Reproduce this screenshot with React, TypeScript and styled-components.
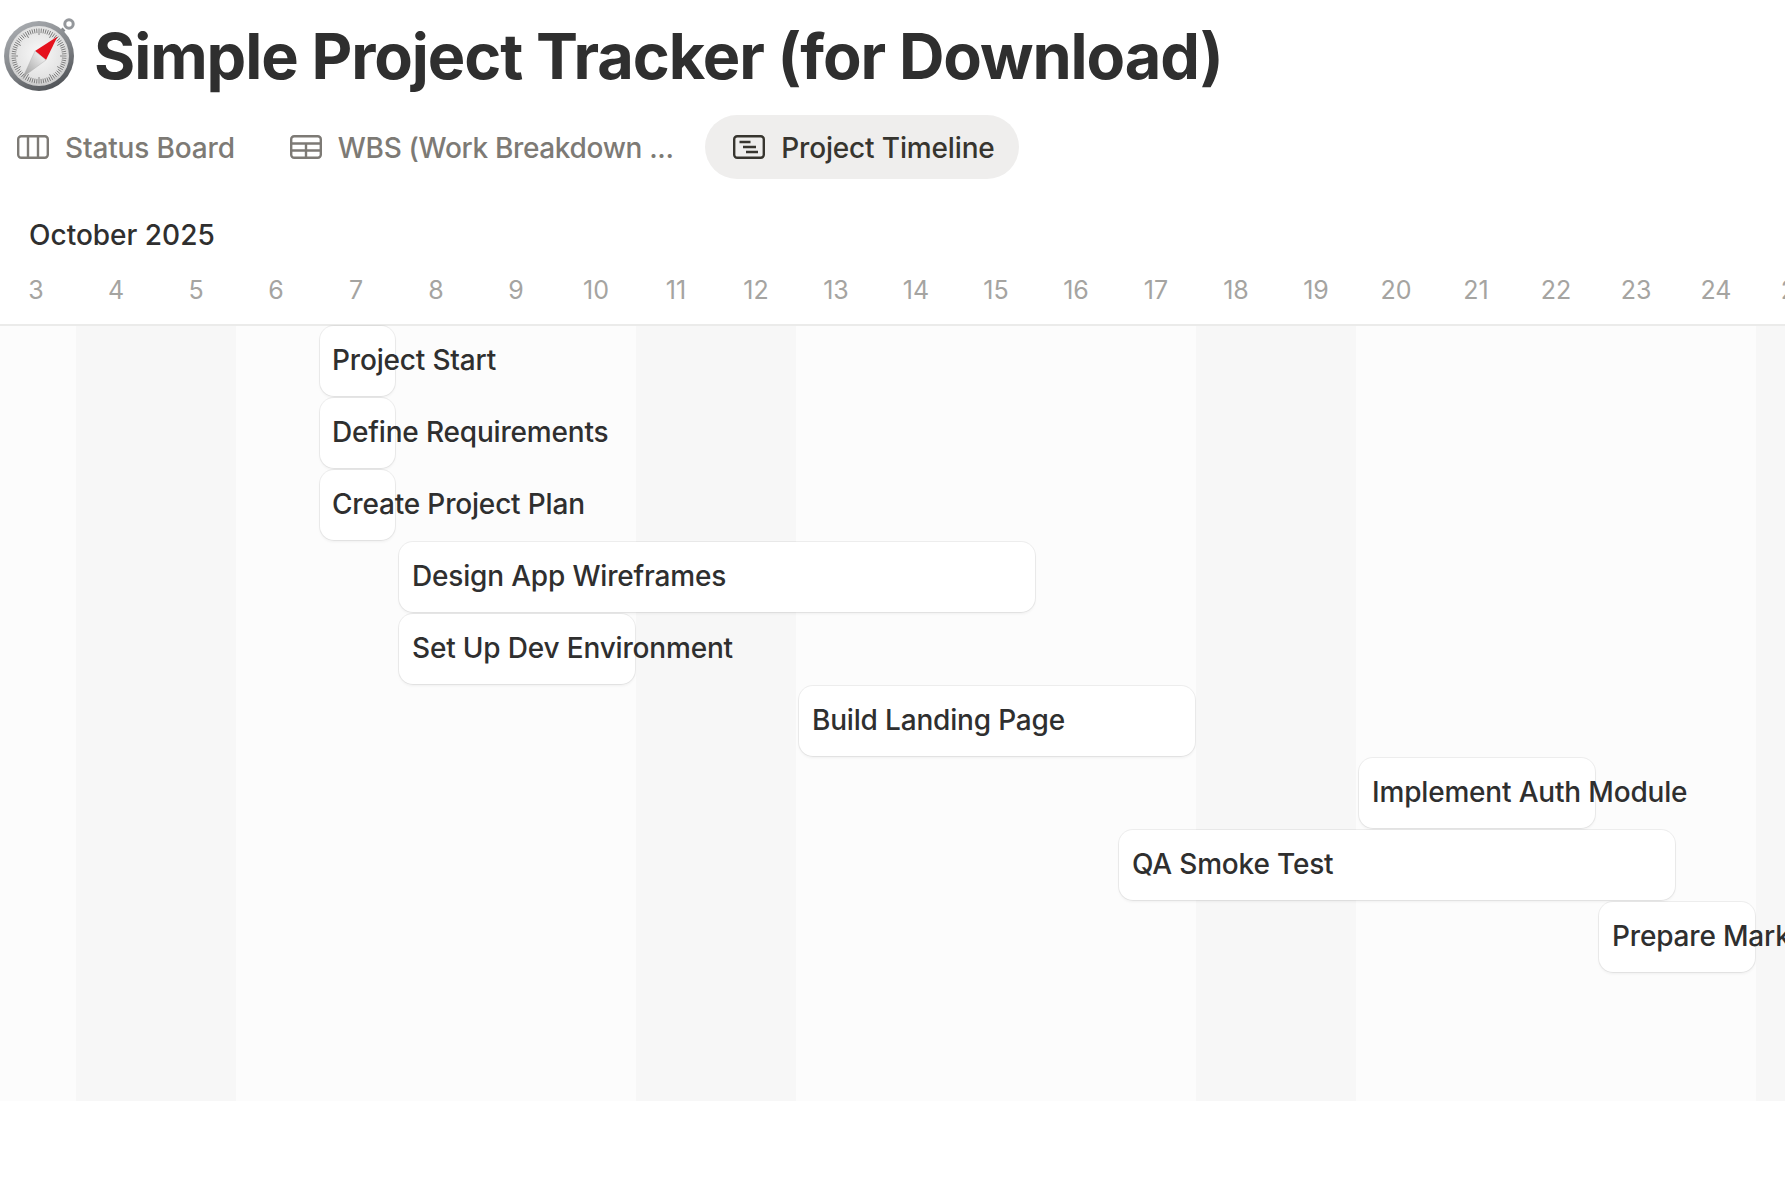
import { FC } from 'react';
import styled, { createGlobalStyle } from 'styled-components';

const DAY_WIDTH = 80;
const FIRST_DAY = 3;
const days = Array.from({ length: 23 }, (_, i) => FIRST_DAY + i);
const isWeekend = (day: number) => day % 7 === 4 || day % 7 === 5;

const tasks = [
  { name: 'Project Start', from: 7, to: 7, tight: true },
  { name: 'Define Requirements', from: 7, to: 7, tight: true },
  { name: 'Create Project Plan', from: 7, to: 7, tight: true },
  { name: 'Design App Wireframes', from: 8, to: 15 },
  { name: 'Set Up Dev Environment', from: 8, to: 10 },
  { name: 'Build Landing Page', from: 13, to: 17 },
  { name: 'Implement Auth Module', from: 20, to: 22 },
  { name: 'QA Smoke Test', from: 17, to: 23 },
  { name: 'Prepare Marketing Assets', from: 23, to: 24 },
];

const CompassEmoji: FC = () => {
  const ticks = Array.from({ length: 72 }, (_, i) => i * 5);
  return (
    <EmojiSvg viewBox="0 0 80 94" aria-hidden="true">
      <defs>
        <linearGradient id="rim" x1="0.25" y1="0" x2="0.75" y2="1">
          <stop offset="0" stopColor="#a9acb0" />
          <stop offset="0.55" stopColor="#7f8286" />
          <stop offset="1" stopColor="#4c4f53" />
        </linearGradient>
        <radialGradient id="face" cx="0.5" cy="0.45" r="0.62">
          <stop offset="0" stopColor="#f8f8f8" />
          <stop offset="0.7" stopColor="#e2e2e2" />
          <stop offset="1" stopColor="#b9b9b9" />
        </radialGradient>
        <linearGradient id="tail" x1="1" y1="0" x2="0" y2="1">
          <stop offset="0" stopColor="#ffffff" />
          <stop offset="1" stopColor="#9a9a9a" />
        </linearGradient>
      </defs>
      <line x1="64" y1="29" x2="60" y2="33" stroke="#85888c" strokeWidth="4" />
      <circle cx="69" cy="24" r="4.2" fill="none" stroke="#94979b" strokeWidth="3" />
      <circle cx="39" cy="56" r="35" fill="url(#rim)" />
      <circle cx="39" cy="56" r="30" fill="url(#face)" />
      {ticks.map((angle) => (
        <line
          key={angle}
          x1="39"
          y1="28.5"
          x2="39"
          y2={angle % 30 === 0 ? 35 : 33}
          stroke="#6f6f6f"
          strokeWidth="0.8"
          transform={`rotate(${angle} 39 56)`}
        />
      ))}
      <polygon points="57.5,36.5 46,60 35,51" fill="#e5111d" />
      <polygon points="46,60 35,51 23,77" fill="url(#tail)" stroke="#a9a9a9" strokeWidth="0.4" />
    </EmojiSvg>
  );
};

const BoardIcon: FC = () => (
  <TabSvg viewBox="0 0 32 24" aria-hidden="true">
    <rect x="1.2" y="1.2" width="29.6" height="21.6" rx="3" />
    <path d="M11 1.2v21.6M21 1.2v21.6" />
  </TabSvg>
);

const TableIcon: FC = () => (
  <TabSvg viewBox="0 0 32 24" aria-hidden="true">
    <rect x="1.2" y="1.2" width="29.6" height="21.6" rx="3" />
    <path d="M1.2 8.5h29.6M1.2 15.5h29.6M16 8.5v14.3" />
  </TabSvg>
);

const TimelineIcon: FC = () => (
  <TabSvg viewBox="0 0 32 24" aria-hidden="true">
    <rect x="1.2" y="1.2" width="29.6" height="21.6" rx="3" />
    <path d="M6.5 7h11M10 12h13M13 17h12" />
  </TabSvg>
);

export default function App() {
  return (
    <>
      <GlobalStyle />
      <Page>
        <TitleRow>
          <CompassEmoji />
          <Title>Simple Project Tracker (for Download)</Title>
        </TitleRow>
        <Tabs>
          <Tab>
            <BoardIcon />
            <TabLabel>Status Board</TabLabel>
          </Tab>
          <Tab>
            <TableIcon />
            <TabLabel $narrow>WBS (Work Breakdown ...</TabLabel>
          </Tab>
          <Tab $active>
            <TimelineIcon />
            <TabLabel>Project Timeline</TabLabel>
          </Tab>
        </Tabs>
        <Month>October 2025</Month>
        <DayRow>
          {days.map((day) => (
            <DayLabel key={day}>{day}</DayLabel>
          ))}
        </DayRow>
        <Chart>
          {days.map((day, i) => (
            <Stripe key={day} $column={i + 1} $weekend={isWeekend(day)} />
          ))}
          {tasks.map((task, i) => (
            <Bar
              key={task.name}
              $row={i + 1}
              $column={task.from - FIRST_DAY + 1}
              $span={task.to - task.from + 1}
              $tight={task.tight}
            >
              <BarLabel>{task.name}</BarLabel>
            </Bar>
          ))}
        </Chart>
      </Page>
    </>
  );
}

const GlobalStyle = createGlobalStyle`
  html, body {
    margin: 0;
    background: #ffffff;
    overflow: hidden;
  }

  body {
    font-family: Inter, "Liberation Sans", sans-serif;
    color: #2f2f2f;
  }
`;

const Page = styled.div`
  width: 1785px;
  height: 1190px;
  overflow: hidden;
`;

const TitleRow = styled.div`
  display: flex;
  align-items: center;
  height: 115px;
`;

const EmojiSvg = styled.svg`
  flex: none;
  width: 80px;
  height: 94px;
  margin-right: 14px;
  align-self: flex-start;
  display: block;
`;

const Title = styled.h1`
  margin: 0 0 2px;
  font-size: 63px;
  line-height: 1;
  font-weight: 700;
  letter-spacing: -1.08px;
  white-space: nowrap;
  color: #2f2f2f;
`;

const Tabs = styled.div`
  display: flex;
  align-items: center;
  height: 64px;
  margin-left: -11px;
  gap: 3px;
`;

const TabSvg = styled.svg`
  flex: none;
  width: 32px;
  height: 24px;
  fill: none;
  stroke: currentColor;
  stroke-width: 2.4;
`;

const Tab = styled.div<{ $active?: boolean }>`
  display: flex;
  align-items: center;
  gap: 16px;
  height: 64px;
  padding: 0 24px 0 28px;
  border-radius: 32px;
  color: ${({ $active }) => ($active ? '#37352f' : '#7d7a75')};
  background: ${({ $active }) => ($active ? '#efeeed' : 'transparent')};
  margin-left: ${({ $active }) => ($active ? '4.5px' : '0')};
`;

const TabLabel = styled.span<{ $narrow?: boolean }>`
  padding-top: 2px;
  font-size: 28px;
  font-weight: 500;
  white-space: nowrap;
  letter-spacing: ${({ $narrow }) => ($narrow ? '-0.33px' : '-0.15px')};
`;

const Month = styled.div`
  margin: 38px 0 0 29px;
  height: 36px;
  font-size: 28px;
  line-height: 36px;
  font-weight: 500;
  color: #2f2f2f;
`;

const DayRow = styled.div`
  display: flex;
  box-sizing: border-box;
  height: 71px;
  margin-left: -4px;
  padding-top: 2px;
  align-items: center;
`;

const DayLabel = styled.div`
  flex: none;
  width: ${DAY_WIDTH}px;
  text-align: center;
  font-size: 25px;
  color: #a5a4a1;
`;

const Chart = styled.div`
  display: grid;
  grid-template-columns: repeat(${days.length}, ${DAY_WIDTH}px);
  grid-template-rows: repeat(9, 72px) 127px;
  margin-left: -4px;
  border-top: 2px solid #ebebea;
  width: ${days.length * DAY_WIDTH}px;
`;

const Stripe = styled.div<{ $column: number; $weekend: boolean }>`
  grid-column: ${({ $column }) => $column};
  grid-row: 1 / -1;
  background: ${({ $weekend }) => ($weekend ? '#f7f7f7' : '#fcfcfc')};
`;

const Bar = styled.div<{ $row: number; $column: number; $span: number; $tight?: boolean }>`
  grid-row: ${({ $row }) => $row};
  grid-column: ${({ $column }) => $column} / span ${({ $span }) => $span};
  z-index: 1;
  display: flex;
  align-items: center;
  height: 70px;
  margin: 0 1px 2px ${({ $tight }) => ($tight ? '4px' : '3px')};
  padding: 0 0 2px ${({ $tight }) => ($tight ? '12px' : '13px')};
  box-sizing: border-box;
  background: #ffffff;
  border-radius: 14px;
  box-shadow: 0 0 0 1px rgba(0, 0, 0, 0.06), 0 2px 3px rgba(0, 0, 0, 0.05);
`;

const BarLabel = styled.span`
  font-size: 28px;
  font-weight: 500;
  letter-spacing: -0.18px;
  white-space: nowrap;
  color: #2f2f2f;
`;
